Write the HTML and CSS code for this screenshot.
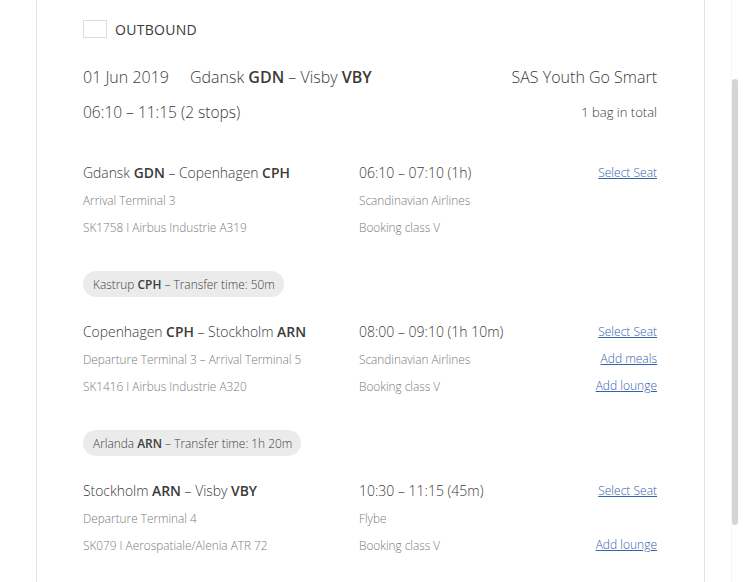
FILE: index.html
```html
<!DOCTYPE html>
<html>
<head>
<meta charset="utf-8">
<link rel="stylesheet" href="styles.css">
</head>
<body>
<div class="page">
  <div class="card">
    <div class="direction">
      <span class="dir-icon"></span>
      <span class="dir-label">OUTBOUND</span>
    </div>
    <div class="summary">
      <div class="sum-left"><span class="date">01 Jun 2019</span><span>Gdansk <b>GDN</b> – Visby <b>VBY</b></span></div>
      <div class="fare">SAS Youth Go Smart</div>
    </div>
    <div class="summary2">
      <div>06:10 – 11:15 (2 stops)</div>
      <div class="bag">1 bag in total</div>
    </div>

    <div class="segment first">
      <div class="title">Gdansk <b>GDN</b> – Copenhagen <b>CPH</b></div>
      <div class="time">06:10 – 07:10 (1h)</div>
      <div class="link-cell title-row"><a href="#">Select Seat</a></div>
      <div class="sub">Arrival Terminal 3</div>
      <div class="sub">Scandinavian Airlines</div>
      <div class="link-cell"></div>
      <div class="sub">SK1758 I Airbus Industrie A319</div>
      <div class="sub">Booking class V</div>
      <div class="link-cell"></div>
    </div>

    <div class="transfer"><span class="pill">Kastrup <b>CPH</b> – Transfer time: 50m</span></div>

    <div class="segment">
      <div class="title">Copenhagen <b>CPH</b> – Stockholm <b>ARN</b></div>
      <div class="time">08:00 – 09:10 (1h 10m)</div>
      <div class="link-cell title-row"><a href="#">Select Seat</a></div>
      <div class="sub">Departure Terminal 3 – Arrival Terminal 5</div>
      <div class="sub">Scandinavian Airlines</div>
      <div class="link-cell"><a href="#">Add meals</a></div>
      <div class="sub">SK1416 I Airbus Industrie A320</div>
      <div class="sub">Booking class V</div>
      <div class="link-cell"><a href="#">Add lounge</a></div>
    </div>

    <div class="transfer"><span class="pill">Arlanda <b>ARN</b> – Transfer time: 1h 20m</span></div>

    <div class="segment">
      <div class="title">Stockholm <b>ARN</b> – Visby <b>VBY</b></div>
      <div class="time">10:30 – 11:15 (45m)</div>
      <div class="link-cell title-row"><a href="#">Select Seat</a></div>
      <div class="sub">Departure Terminal 4</div>
      <div class="sub">Flybe</div>
      <div class="link-cell"></div>
      <div class="sub">SK079 I Aerospatiale/Alenia ATR 72</div>
      <div class="sub">Booking class V</div>
      <div class="link-cell"><a href="#">Add lounge</a></div>
    </div>
  </div>
  <div class="scrollbar"><div class="thumb"></div></div>
</div>
</body>
</html>
```

FILE: styles.css
```css
html, body {
  margin: 0;
  padding: 0;
  background: #ffffff;
}
body {
  font-family: "Open Sans", "Noto Sans", sans-serif;
  font-weight: 300;
  color: #3a3a3a;
  width: 743px;
  height: 582px;
  overflow: hidden;
}
.page {
  position: relative;
  height: 582px;
  display: flex;
}
.card {
  margin-left: 36px;
  width: 669px;
  height: 582px;
  border-left: 1px solid #e2e2e2;
  border-right: 1px solid #e2e2e2;
  padding: 20px 47px 0 46px;
  box-sizing: border-box;
}
.direction {
  display: flex;
  align-items: center;
  height: 18px;
}
.dir-icon {
  width: 22px;
  height: 16px;
  border: 1px solid #dcdcdc;
  margin-right: 8px;
}
.dir-label {
  font-size: 14px;
  font-weight: 400;
  letter-spacing: 0.3px;
  color: #3a3a3a;
}
.summary {
  margin-top: 27px;
  display: flex;
  justify-content: space-between;
  font-size: 16px;
  line-height: 24px;
}
.summary b, .title b, .pill b {
  font-weight: 600;
}
.date {
  margin-right: 21px;
}
.summary2 {
  margin-top: 11px;
  display: flex;
  justify-content: space-between;
  font-size: 15.5px;
  line-height: 24px;
}
.bag {
  font-size: 13px;
}
.segment {
  margin-top: 20px;
  display: grid;
  grid-template-columns: 276px 1fr auto;
  grid-template-rows: 28px 27px 27px;
  align-items: center;
}
.segment.first {
  margin-top: 34px;
}
.title {
  font-size: 13.9px;
}
.time {
  font-size: 14px;
}
.sub {
  font-size: 11.8px;
  color: #7a7a7a;
}
.link-cell {
  text-align: right;
  font-size: 12px;
}
.link-cell a {
  color: #3462ad;
  text-decoration: underline;
}
.transfer {
  margin-top: 31px;
  display: flex;
}
.pill {
  background: #ebebeb;
  border-radius: 13px;
  height: 26px;
  line-height: 26px;
  padding: 0 9px 0 10px;
  font-size: 11.9px;
  color: #404040;
}
.scrollbar {
  position: absolute;
  top: 0;
  right: 0;
  width: 12px;
  height: 582px;
  border-left: 1px solid #f6f6f6;
  box-sizing: border-box;
}
.thumb {
  position: absolute;
  left: 0;
  top: 79px;
  width: 6px;
  height: 446px;
  background: #d4d4d4;
  border-radius: 3px;
}
```
